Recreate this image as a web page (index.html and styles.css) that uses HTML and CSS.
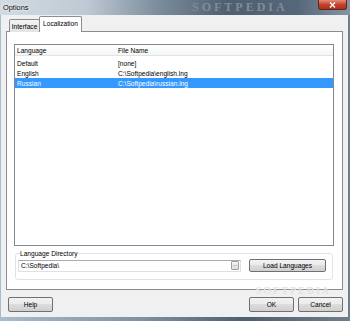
FILE: index.html
```html
<!DOCTYPE html>
<html lang="en">
<head>
    <meta charset="UTF-8">
    <title>Options</title>
    <link rel="stylesheet" href="styles.css">
</head>
<body>
    <div class="window">
        <div class="titlebar">
            <span class="title">Options</span>
            <span class="watermark">SOFTPEDIA</span>
            <span class="close">
                <svg width="7" height="6" viewBox="0 0 7 6"><path d="M1 0.5 L6 5.5 M6 0.5 L1 5.5" stroke="#fff" stroke-width="1.4"/></svg>
            </span>
        </div>
        <div class="client">
            <div class="tabs">
                <div class="tab">Interface</div>
                <div class="tab active">Localization</div>
            </div>
            <div class="panel">
                <div class="list">
                    <div class="row head">
                        <span class="col-lang">Language</span>
                        <span class="col-file">File Name</span>
                    </div>
                    <div class="row">
                        <span class="col-lang">Default</span>
                        <span class="col-file">[none]</span>
                    </div>
                    <div class="row">
                        <span class="col-lang">English</span>
                        <span class="col-file">C:\Softpedia\english.lng</span>
                    </div>
                    <div class="row selected">
                        <span class="col-lang">Russian</span>
                        <span class="col-file">C:\Softpedia\russian.lng</span>
                    </div>
                </div>
                <fieldset class="group">
                    <legend>Language Directory</legend>
                    <div class="dir-row">
                        <div class="textbox">
                            <span>C:\Softpedia\</span>
                            <span class="browse">...</span>
                        </div>
                        <button class="btn load">Load Languages</button>
                    </div>
                </fieldset>
            </div>
            <div class="footer">
                <button class="btn">Help</button>
                <span class="spacer"></span>
                <button class="btn">OK</button>
                <button class="btn">Cancel</button>
                <span class="mark">SOFTPEDIA</span>
            </div>
        </div>
    </div>
</body>
</html>
```

FILE: styles.css
```css
body {
    margin: 0;
    font-family: "Liberation Sans", Arial, sans-serif;
    font-size: 6.6px;
    color: #000;
    background: #5d6d7c;
}
.window {
    width: 350px;
    height: 321px;
    display: flex;
    flex-direction: column;
    background: linear-gradient(90deg, #a9bccd 0%, #7f91a3 40%, #4e5f6f 70%, #6e7e8d 100%);
    overflow: hidden;
}
.titlebar {
    height: 15px;
    position: relative;
    overflow: hidden;
    background: linear-gradient(90deg, #d2dbe3 0%, #bdc9d4 25%, #7c8d9c 45%, #4f5f6f 65%, #56677a 85%, #8795a2 100%);
}
.title {
    position: absolute;
    left: 3px;
    top: 3px;
    font-size: 7.4px;
    text-shadow: 0 0 3px #fff, 0 0 2px #fff;
}
.watermark {
    position: absolute;
    left: 192px;
    top: 0;
    font-family: "Liberation Serif", serif;
    font-size: 12px;
    line-height: 14px;
    font-weight: bold;
    letter-spacing: 3px;
    color: #7e8d9b;
}
.close {
    position: absolute;
    right: 3px;
    top: 0;
    width: 29px;
    height: 10px;
    border: 1px solid #5a2a22;
    border-top: none;
    border-radius: 0 0 3px 3px;
    background: linear-gradient(#e48d78, #c5422b 50%, #b02d18);
    display: flex;
    align-items: center;
    justify-content: center;
    box-sizing: border-box;
}
.client {
    height: 302px;
    margin: 0 2px 0 1px;
    padding: 1px 5px 0 5px;
    background: #f0f0f0;
    box-sizing: border-box;
}
.tabs {
    display: flex;
    align-items: flex-end;
    height: 16px;
    margin-bottom: -1px;
    padding-left: 3px;
    position: relative;
    z-index: 1;
}
.tab {
    height: 13px;
    width: 31px;
    box-sizing: border-box;
    border: 1px solid #898c95;
    border-bottom: none;
    border-radius: 2px 2px 0 0;
    background: linear-gradient(#f3f3f3, #e3e3e3);
    display: flex;
    align-items: center;
    justify-content: center;
}
.tab.active {
    height: 16px;
    width: 43px;
    margin-left: -1px;
    background: #fff;
    padding-bottom: 2px;
}
.panel {
    height: 259px;
    border: 1px solid #898c95;
    background: #fff;
    box-sizing: border-box;
    padding: 12px 8px 0 7px;
}
.list {
    height: 202px;
    border: 1px solid #828790;
    box-sizing: border-box;
    background: #fff;
}
.row {
    display: flex;
    height: 10px;
    align-items: center;
}
.row.head {
    height: 11px;
    margin-bottom: 2px;
    background: linear-gradient(#fff, #f4f5f6);
    border-bottom: 1px solid #e2e3e5;
    box-sizing: border-box;
}
.row.selected {
    background: #3399ff;
    color: #fff;
}
.col-lang {
    width: 101px;
    padding-left: 2px;
}
.group {
    margin: 4px 1px 0 1px;
    height: 30px;
    border: 1px solid #dde3ea;
    border-radius: 3px;
    padding: 0 0 0 2px;
    box-sizing: border-box;
}
.group legend {
    padding: 0;
    margin-left: 2px;
    color: #000;
}
.dir-row {
    display: flex;
    align-items: center;
    margin-top: 2px;
}
.textbox {
    width: 223px;
    height: 12px;
    box-sizing: border-box;
    border: 1px solid #dbe1e8;
    border-top-color: #abadb3;
    display: flex;
    align-items: center;
    justify-content: space-between;
    padding: 0 1px 0 2px;
    background: #fff;
}
.browse {
    width: 8px;
    height: 9px;
    box-sizing: border-box;
    border: 1px solid #a0a0a0;
    border-radius: 1px;
    background: linear-gradient(#f6f6f6, #dcdcdc);
    font-size: 5px;
    line-height: 4px;
    text-align: center;
    color: #333;
}
.btn {
    height: 13px;
    box-sizing: border-box;
    border: 1px solid #707070;
    border-radius: 2px;
    background: linear-gradient(#f2f2f2 0%, #ebebeb 45%, #dddddd 50%, #cfcfcf 100%);
    font-family: inherit;
    font-size: 6.6px;
    padding: 0;
    color: #000;
}
.load {
    width: 77px;
    margin-left: 8px;
}
.footer {
    position: relative;
    display: flex;
    align-items: center;
    margin-top: 7px;
    padding-left: 2px;
}
.footer .btn {
    width: 45px;
    height: 15px;
}
.footer .btn + .btn {
    margin-left: 4px;
}
.spacer {
    flex: 1;
}
.mark {
    position: absolute;
    right: 12px;
    top: -12px;
    font-family: "Liberation Serif", serif;
    font-weight: bold;
    font-size: 10px;
    letter-spacing: 2px;
    color: #e2e2e2;
}
```
